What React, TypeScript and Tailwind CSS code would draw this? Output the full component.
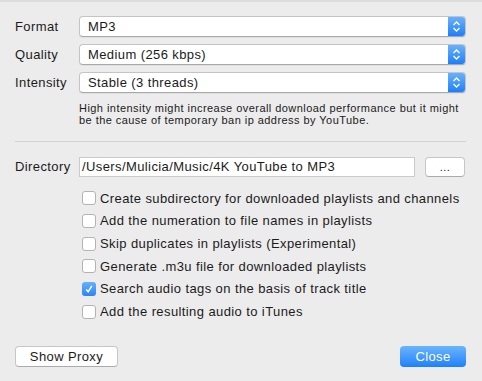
import React from "react";

const font = { fontFamily: '"Liberation Sans", Arial, sans-serif' };

const Select = ({ value }: { value: string }) => (
  <div className="flex-1 h-[21px] flex bg-white rounded-[4px] border border-[#c4c4c4] border-b-[#a8a8a8] shadow-[0_1px_0_rgba(0,0,0,0.05)] overflow-hidden">
    <div className="flex-1 pl-[8px] text-[13px] leading-[19px] text-[#1b1b1b]">{value}</div>
    <div className="w-[17px] flex items-center justify-center bg-gradient-to-b from-[#68b1fb] to-[#1c7ef9]">
      <svg width="9" height="13" viewBox="0 0 9 13" fill="none" stroke="white" strokeWidth="1.4">
        <path d="M1.5 5 L4.5 2 L7.5 5" />
        <path d="M1.5 8 L4.5 11 L7.5 8" />
      </svg>
    </div>
  </div>
);

const Check = ({ label, checked }: { label: string; checked?: boolean }) => (
  <div className="h-[22.7px] flex items-center">
    {checked ? (
      <div className="w-[14px] h-[14px] rounded-[3px] bg-gradient-to-b from-[#66b0fb] to-[#2a84f7] flex items-center justify-center">
        <svg width="10" height="10" viewBox="0 0 10 10" fill="none" stroke="white" strokeWidth="1.5">
          <path d="M2.2 5.4 L4.2 7.8 L7.8 1.8" />
        </svg>
      </div>
    ) : (
      <div className="w-[14px] h-[14px] rounded-[3px] bg-white border border-[#b3b3b3]" />
    )}
    <span className="ml-[4px] text-[13px] text-[#1b1b1b]">{label}</span>
  </div>
);

const App = () => {
  return (
    <div style={font} className="w-[482px] h-[381px] bg-[#ececec] border-t-2 border-[#dcdcdc] flex flex-col pl-[15px] pr-[16px] tracking-[0.4px]">
      {/* Settings */}
      <div className="mt-[14px] flex flex-col gap-[7px]">
        {[
          ["Format", "MP3"],
          ["Quality", "Medium (256 kbps)"],
          ["Intensity", "Stable (3 threads)"],
        ].map(([l, v]) => (
          <div key={l} className="flex items-center">
            <div className="w-[64px] text-[13px] text-[#1b1b1b]">{l}</div>
            <Select value={v} />
          </div>
        ))}
      </div>
      <p className="ml-[64px] mt-[9px] text-[11px] leading-[12px] tracking-[0.45px] text-[#1b1b1b] whitespace-nowrap">
        High intensity might increase overall download performance but it might
        <br />
        be the cause of temporary ban ip address by YouTube.
      </p>

      <div className="mt-[15px] h-px bg-[#d2d2d2]" />

      {/* Directory */}
      <div className="mt-[15px] flex items-center">
        <div className="w-[64px] text-[13px] text-[#1b1b1b]">Directory</div>
        <div className="w-[336px] h-[20px] bg-white border border-[#cbcbcb] pl-[2px] text-[13px] leading-[18px] text-[#1b1b1b]">
          /Users/Mulicia/Music/4K YouTube to MP3
        </div>
        <button className="ml-[10px] w-[40px] h-[20px] bg-white rounded-[4px] border border-[#c6c6c6] border-b-[#ababab] text-[11px] leading-[14px] text-[#1b1b1b]">
          ...
        </button>
      </div>

      <div className="ml-[67px] mt-[10px] flex flex-col">
        <Check label="Create subdirectory for downloaded playlists and channels" />
        <Check label="Add the numeration to file names in playlists" />
        <Check label="Skip duplicates in playlists (Experimental)" />
        <Check label="Generate .m3u file for downloaded playlists" />
        <Check label="Search audio tags on the basis of track title" checked />
        <Check label="Add the resulting audio to iTunes" />
      </div>

      {/* Footer */}
      <div className="mt-auto mb-[14px] flex justify-between">
        <button className="w-[103px] h-[21px] bg-white rounded-[4px] border border-[#c6c6c6] border-b-[#ababab] text-[13px] text-[#1b1b1b]">
          Show Proxy
        </button>
        <button className="w-[66px] h-[21px] rounded-[4px] bg-gradient-to-b from-[#6ab4fb] to-[#1b80fa] text-[13px] text-white">
          Close
        </button>
      </div>
    </div>
  );
};

export default App;
